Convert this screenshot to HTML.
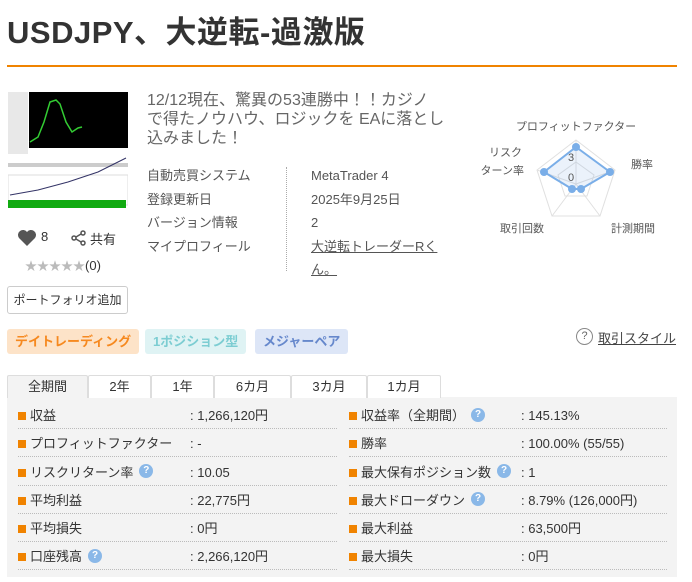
<!DOCTYPE html>
<html><head><meta charset="utf-8"><style>
*{margin:0;padding:0;box-sizing:border-box}
body{width:692px;height:582px;background:#fff;font-family:"Liberation Sans","Noto Sans CJK JP",sans-serif;color:#333;position:relative;overflow:hidden;font-size:13px}
.a{position:absolute;white-space:nowrap}
h1{position:absolute;left:7px;top:7px;font-size:31px;font-weight:bold;color:#333;letter-spacing:0.5px}
.tag{position:absolute;top:329px;height:25px;line-height:25px;border-radius:3px;font-size:13px;font-weight:bold;padding:0 8px}
.tab{position:absolute;top:375px;height:23px;border:1px solid #ddd;border-bottom:none;background:#fff;text-align:center;line-height:22px;font-size:13px;border-radius:2px 2px 0 0}
.sq{display:inline-block;width:8px;height:8px;background:#f08300;margin-right:4px;vertical-align:0}
.q{display:inline-block;width:14px;height:14px;border-radius:50%;background:#8ab8e8;color:#fff;font-size:10px;line-height:14px;text-align:center;font-weight:bold;margin-left:6px;vertical-align:middle;position:relative;top:-2px}
.row{position:absolute;height:28px;border-bottom:1px dotted #bbb}
</style></head><body>
<h1>USDJPY、大逆転-過激版</h1>
<div class="a" style="left:7px;top:65px;width:670px;height:2px;background:#f08300"></div>

<svg class="a" style="left:8px;top:92px" width="120" height="122">
<rect x="0" y="0" width="120" height="122" fill="#fff"/>
<rect x="0" y="0" width="20" height="62" fill="#e8e8e8"/>
<rect x="21" y="0" width="99" height="56" fill="#000"/>
<polyline points="22,50 30,45 36,30 42,10 48,8 52,12 58,30 64,40 70,36 74,35" fill="none" stroke="#3c3" stroke-width="1.5"/>
<rect x="0" y="71" width="120" height="4" fill="#ccc"/>
<rect x="0" y="83" width="120" height="30" fill="#fff" stroke="#ddd"/>
<polyline points="2,103 30,98 60,90 90,80 118,66" fill="none" stroke="#336" stroke-width="1"/>
<rect x="0" y="108" width="118" height="8" fill="#1a1"/>
</svg>

<svg class="a" style="left:17px;top:229px" width="20" height="18" viewBox="0 0 20 18"><path d="M10 17 L2 9 A4.5 4.5 0 0 1 10 3 A4.5 4.5 0 0 1 18 9 Z" fill="#555"/></svg>
<div class="a" style="left:41px;top:229px;font-size:13px">8</div>
<svg class="a" style="left:71px;top:230px" width="16" height="16"><circle cx="12" cy="3" r="2" fill="none" stroke="#555" stroke-width="1.5"/><circle cx="3" cy="8" r="2" fill="none" stroke="#555" stroke-width="1.5"/><circle cx="12" cy="13" r="2" fill="none" stroke="#555" stroke-width="1.5"/><path d="M5 7L10 4M5 9L10 12" stroke="#555" stroke-width="1.5"/></svg>
<div class="a" style="left:90px;top:229px;font-size:13px">共有</div>
<div class="a" style="left:25px;top:257px;font-size:13px"><span style="color:#bbb;font-size:12px">★★★★★</span>(0)</div>
<div class="a" style="left:7px;top:286px;width:121px;height:28px;border:1px solid #ccc;border-radius:3px;text-align:center;line-height:26px;font-size:12px">ポートフォリオ追加</div>

<div class="a" style="left:147px;top:91px;font-size:16px;line-height:19px;color:#666">12/12現在、驚異の53連勝中！！カジノ<br>で得たノウハウ、ロジックを EAに落とし<br>込みました！</div>

<div class="a" style="left:147px;top:164px;color:#555;line-height:23.5px">自動売買システム<br>登録更新日<br>バージョン情報<br>マイプロフィール</div>
<div class="a" style="left:286px;top:167px;height:104px;border-left:1px dotted #aaa"></div>
<div class="a" style="left:311px;top:164px;color:#555;line-height:23.5px">MetaTrader 4<br>2025年9月25日<br>2<br><span style="text-decoration:underline">大逆転トレーダーRく<br>ん。</span></div>

<svg class="a" style="left:460px;top:100px" width="232" height="150">
<g fill="none" stroke="#e0e0e0">
<polygon points="116,40 155,70 140,116 92,116 77,70"/>
<polygon points="116,62 134,75 127,96 105,96 98,75"/>
<path d="M116,84L116,40M116,84L155,70M116,84L140,116M116,84L92,116M116,84L77,70"/>
</g>
<polygon points="116,47 150,72 121,89 112,89 84,72" fill="rgba(120,170,230,0.15)" stroke="#7aaee8" stroke-width="2"/>
<g fill="#7aaee8"><circle cx="116" cy="47" r="4"/><circle cx="150" cy="72" r="4"/><circle cx="121" cy="89" r="4"/><circle cx="112" cy="89" r="4"/><circle cx="84" cy="72" r="4"/></g>
<g font-size="11" fill="#555" font-family="Liberation Sans,Noto Sans CJK JP,sans-serif">
<text x="108" y="61">3</text><text x="108" y="81">0</text>
<text x="116" y="30" text-anchor="middle">プロフィットファクター</text>
<text x="171" y="68">勝率</text>
<text x="62" y="56" text-anchor="end">リスク</text><text x="64" y="74" text-anchor="end">ターン率</text>
<text x="40" y="132">取引回数</text>
<text x="151" y="132">計測期間</text>
</g></svg>

<div class="tag" style="left:7px;background:#fde3c8;color:#f6891f">デイトレーディング</div>
<div class="tag" style="left:145px;background:#dff3f4;color:#7ccdd2">1ポジション型</div>
<div class="tag" style="left:255px;background:#dde6f7;color:#6688cc">メジャーペア</div>
<div class="a" style="left:576px;top:328px;width:17px;height:17px;border:1px solid #888;border-radius:50%;text-align:center;line-height:15px;font-size:11px;color:#666">?</div>
<div class="a" style="left:598px;top:328px;font-size:13px;text-decoration:underline;color:#444">取引スタイル</div>

<div class="a" style="left:7px;top:397px;width:670px;height:180px;background:#f3f3f3"></div>
<div class="tab" style="left:7px;width:81px;background:#f3f3f3">全期間</div>
<div class="tab" style="left:88px;width:63px">2年</div>
<div class="tab" style="left:151px;width:63px">1年</div>
<div class="tab" style="left:214px;width:77px">6カ月</div>
<div class="tab" style="left:291px;width:76px">3カ月</div>
<div class="tab" style="left:367px;width:74px">1カ月</div>

<div style="position:absolute;left:0;top:401px;font-size:13px">
<div class="row" style="left:18px;top:0;width:319px"></div><div class="row" style="left:349px;top:0;width:318px"></div>
<div class="row" style="left:18px;top:28px;width:319px"></div><div class="row" style="left:349px;top:28px;width:318px"></div>
<div class="row" style="left:18px;top:57px;width:319px"></div><div class="row" style="left:349px;top:57px;width:318px"></div>
<div class="row" style="left:18px;top:85px;width:319px"></div><div class="row" style="left:349px;top:85px;width:318px"></div>
<div class="row" style="left:18px;top:113px;width:319px"></div><div class="row" style="left:349px;top:113px;width:318px"></div>
<div class="row" style="left:18px;top:141px;width:319px"></div><div class="row" style="left:349px;top:141px;width:318px"></div>
</div>
<div class="a" style="left:18px;top:402px;line-height:28.3px"><span class="sq"></span>収益<br><span class="sq"></span>プロフィットファクター<br><span class="sq"></span>リスクリターン率<span class="q">?</span><br><span class="sq"></span>平均利益<br><span class="sq"></span>平均損失<br><span class="sq"></span>口座残高<span class="q">?</span></div>
<div class="a" style="left:190px;top:402px;line-height:28.3px">: 1,266,120円<br>: -<br>: 10.05<br>: 22,775円<br>: 0円<br>: 2,266,120円</div>
<div class="a" style="left:349px;top:402px;line-height:28.3px"><span class="sq"></span>収益率（全期間）<span class="q">?</span><br><span class="sq"></span>勝率<br><span class="sq"></span>最大保有ポジション数<span class="q">?</span><br><span class="sq"></span>最大ドローダウン<span class="q">?</span><br><span class="sq"></span>最大利益<br><span class="sq"></span>最大損失</div>
<div class="a" style="left:521px;top:402px;line-height:28.3px">: 145.13%<br>: 100.00% (55/55)<br>: 1<br>: 8.79% (126,000円)<br>: 63,500円<br>: 0円</div>
</body></html>
